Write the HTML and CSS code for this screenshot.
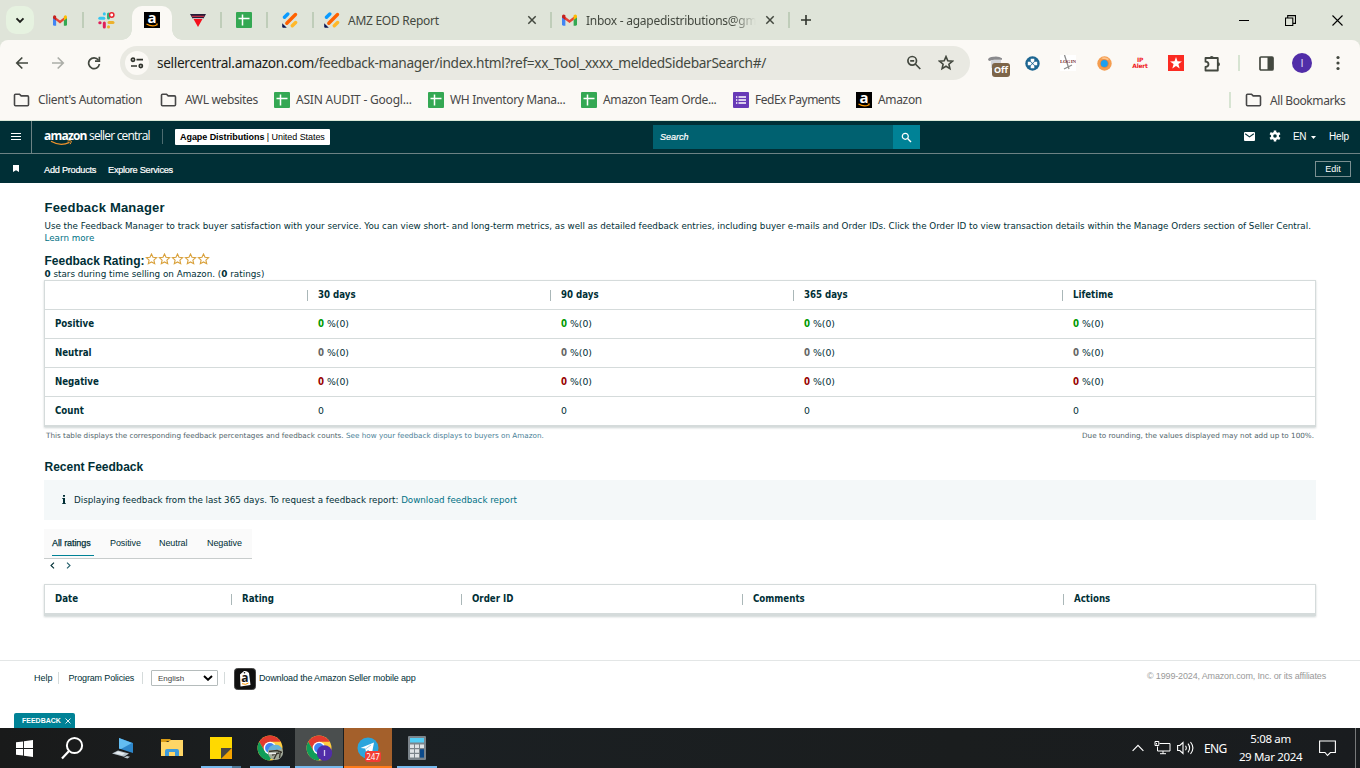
FILE: index.html
```html
<!DOCTYPE html>
<html lang="en">
<head>
<meta charset="utf-8">
<title>Feedback Manager</title>
<link rel="stylesheet" href="styles.css">
</head>
<body>
<svg class="defs" width="0" height="0">
  <symbol id="gmail" viewBox="0 0 16 12"><path fill="#4285f4" d="M0 2v8.5Q0 12 1.4 12H3.6V4z"/><path fill="#34a853" d="M16 2v8.5Q16 12 14.6 12h-2.2V4z"/><path fill="#ea4335" d="M1.5 1L8 6l6.500-5L13 5.500 8 9.300 3 5.500z"/><path fill="#c5221f" d="M0 2Q0 0 1.700 0q.8 0 1.900 1v5L0 3.300z"/><path fill="#fbbc04" d="M16 2q0-2-1.700-2-.8 0-1.900 1v5L16 3.300z"/></symbol>
  <symbol id="sheet" viewBox="0 0 16 16"><rect width="16" height="16" rx="1" fill="#34a853"/><path d="M2.500 6.500h11M6.500 2.500v11" stroke="#fff" stroke-width="1.500" fill="none"/></symbol>
  <symbol id="stripes" viewBox="0 0 16 16"><g stroke-linecap="round" stroke-width="3.400" fill="none"><path d="M2.500 5.300l3.300-3.300" stroke="#0a9bff"/><path d="M4.800 11.200l8.700-8.700" stroke="#ff6100"/><path d="M10.300 13.800l3.300-3.300" stroke="#ffb829"/></g><path fill="#0a1551" d="M.2 11.200l4.600 4.600H1.200Q.2 15.800.2 14.800z"/></symbol>
  <symbol id="folder" viewBox="0 0 16 14"><path d="M1 2.200Q1 1.200 2 1.200h4l1.700 1.700H14q1 0 1 1v7.900q0 1-1 1H2q-1 0-1-1z" fill="none" stroke="#474747" stroke-width="1.600"/></symbol>
  <symbol id="cross" viewBox="0 0 10 10"><path d="M1.300 1.300l7.400 7.400M8.700 1.300L1.300 8.700" stroke="#43483f" stroke-width="1.500"/></symbol>
  <symbol id="chrome" viewBox="0 0 26 26"><circle cx="13" cy="13" r="12.500" fill="#ffcd40"/><path fill="#e33b2e" d="M2.200 6.700A12.500 12.500 0 0 1 23.800 6.700H13L7.500 16z"/><path fill="#109d58" d="M2.200 6.700L7.600 16.100 13 19.200h3.500L12.500 25.500A12.500 12.500 0 0 1 2.200 6.700z"/><circle cx="13" cy="13" r="6.300" fill="#fff"/><circle cx="13" cy="13" r="4.900" fill="#4285f4"/></symbol>
  <symbol id="star" viewBox="0 0 12 12"><path d="M6 1l1.500 3.300 3.600.4-2.700 2.400.8 3.600L6 8.900l-3.200 1.800.8-3.600L.9 4.700l3.600-.4z" fill="#fff" stroke="#d9a13b" stroke-width="1.100"/></symbol>
</svg>

<div class="tabstrip">
  <div class="tabsearch"><svg width="10" height="7" viewBox="0 0 10 7"><path d="M1.500 1.300L5 4.800l3.500-3.500" fill="none" stroke="#1d1f1b" stroke-width="1.900"/></svg></div>
  <div class="tab sep"><svg width="14" height="11"><use href="#gmail"/></svg></div>
  <div class="tab"><svg width="17" height="17" viewBox="0 0 17 17"><g stroke-width="3" stroke-linecap="round" fill="none"><path d="M1.800 6.300h4" stroke="#36c5f0"/><path d="M6.300 1.800v.2" stroke="#36c5f0"/><path d="M10.500 2v4" stroke="#2eb67d"/><path d="M11 10.500h4" stroke="#ecb22e"/><path d="M10.500 14.800v.2" stroke="#ecb22e"/><path d="M6.300 11v4" stroke="#e01e5a"/><path d="M1.800 10.700h.3" stroke="#e01e5a"/></g><circle cx="13.700" cy="3" r="2.200" fill="#fff" stroke="#e8242f" stroke-width="1.500"/></svg></div>
  <div class="tab active"><span class="activebg"><svg class="amz" width="16" height="16" viewBox="0 0 16 16"><rect width="16" height="16"/><text class="aletter" x="8" y="10.800" text-anchor="middle" font-size="15" fill="#fff">a</text><path d="M2.500 12q5.500 3.200 10.200.9" fill="none" stroke="#f90" stroke-width="1.100"/><path fill="#f90" d="M11.500 11.700l2.500-.2-.8 2.200z"/></svg></span></div>
  <div class="tab sep"><svg width="16" height="13" viewBox="0 0 16 13"><path fill="#281c38" d="M0 0h16l-2.500 4.500h-11z"/><path fill="#c42d45" d="M1.500 1.800h13l-.8 1.200H2.300z"/><path fill="#f5101c" d="M3.500 5h9L8 13z"/><path fill="#e9c9cd" d="M2.500 4.300h11l-.4.700H2.900z"/></svg></div>
  <div class="tab sep"><svg width="16" height="16"><use href="#sheet"/></svg></div>
  <div class="tab sep"><svg width="16" height="16"><use href="#stripes"/></svg></div>
  <div class="tab wide sep"><svg width="16" height="16"><use href="#stripes"/></svg><span class="tabtitle">AMZ EOD Report</span><svg width="10" height="10"><use href="#cross"/></svg></div>
  <div class="tab wide sep"><svg width="15" height="12"><use href="#gmail"/></svg><span class="tabtitle t-inbox">Inbox - agapedistributions@gm</span><svg width="10" height="10"><use href="#cross"/></svg></div>
  <div class="newtab"><svg width="12" height="12" viewBox="0 0 12 12"><path d="M6 1v10M1 6h10" stroke="#30342d" stroke-width="1.600"/></svg></div>
  <div class="winbtns">
    <svg width="10" height="10" viewBox="0 0 10 10"><path d="M0 5.500h10" stroke="#000"/></svg>
    <svg width="11" height="11" viewBox="0 0 11 11"><path d="M.5 3h7.300v7.500H.5zM2.700 3V.6h7.800V8.400H7.800" fill="none" stroke="#000" stroke-width="1.100"/></svg>
    <svg width="11" height="11" viewBox="0 0 11 11"><path d="M.5.500l10 10M10.500.500l-10 10" stroke="#000" stroke-width="1.100"/></svg>
  </div>
</div>

<div class="chrome">
  <div class="toolbar">
    <div class="nav">
      <svg width="14" height="14" viewBox="0 0 14 14"><path d="M13 7H2M7.300 1.500L1.800 7l5.500 5.500" fill="none" stroke="#43483f" stroke-width="1.700"/></svg>
      <svg width="14" height="14" viewBox="0 0 14 14"><path d="M1 7h11M6.700 1.500L12.200 7l-5.500 5.500" fill="none" stroke="#acaea8" stroke-width="1.700"/></svg>
      <svg width="14" height="14" viewBox="0 0 14 14"><path d="M11.400 4A5.400 5.400 0 1 0 12.400 8" fill="none" stroke="#43483f" stroke-width="1.700"/><path d="M12.400.8v4.400H8" fill="none" stroke="#43483f" stroke-width="1.700"/></svg>
    </div>
    <div class="omnibox">
      <span class="siteinfo"><svg width="14" height="12" viewBox="0 0 14 12"><g fill="none" stroke="#30332d" stroke-width="1.700"><circle cx="3" cy="2.700" r="1.600"/><path d="M6.500 2.700H13M1 9h6"/><circle cx="10.800" cy="9" r="1.600"/></g></svg></span>
      <span class="url"><b>sellercentral.amazon.com</b>/feedback-manager/index.html?ref=xx_Tool_xxxx_meldedSidebarSearch#/</span>
      <svg class="oi" width="16" height="16" viewBox="0 0 16 16"><circle cx="6.200" cy="5.800" r="4.300" fill="none" stroke="#43483f" stroke-width="1.700"/><path d="M9.300 9l5 5M4.200 5.800h4" stroke="#43483f" stroke-width="1.700"/></svg>
      <svg class="oi" width="16" height="16" viewBox="0 0 16 16"><path d="M8 1.600l1.800 4.200 4.600.4-3.500 3 1 4.500L8 11.300l-3.900 2.400 1-4.500-3.500-3 4.600-.4z" fill="none" stroke="#43483f" stroke-width="1.600"/></svg>
    </div>
    <div class="ext">
      <span class="off"><svg width="17" height="17" viewBox="0 0 17 17"><path d="M1 4.500q1-3 6-2.800 5-.5 8 1.500v1.500H7L2 6z" fill="#8a8a8d"/><path d="M4 5h10v8H4z" fill="#d3d5db"/></svg><i>Off</i></span>
      <span><svg width="15" height="15" viewBox="0 0 15 15"><circle cx="7.500" cy="7.500" r="7.200" fill="#1d6691"/><g fill="#fff"><path d="M5.700 2.800h3.600v2.500L7.500 7 5.700 5.300zM5.700 12.200h3.600V9.700L7.500 8 5.700 9.700zM2.800 5.700v3.600h2.500L7 7.500 5.300 5.700zM12.200 5.700v3.600H9.700L8 7.500l1.700-1.800z"/></g></svg></span>
      <span class="login"><svg width="16" height="16" viewBox="0 0 16 16"><path fill="#fff" d="M0 0h16v16H0z"/><path d="M4.500 0l4.500 14M4 14l8-4" stroke="#8d8d8d" stroke-width="1.300"/><text x="0" y="7.800" font-size="5" font-weight="700" fill="#7b3540" textLength="16">LOG IN</text></svg></span>
      <span><svg width="15" height="15" viewBox="0 0 15 15"><circle cx="7.500" cy="7.500" r="7.200" fill="#f49d4f"/><path d="M4 2q4-2 8 1l-2 2z" fill="#ffc48b"/><circle cx="7.500" cy="7.500" r="4.300" fill="#d98343"/><circle cx="7.300" cy="7.500" r="3.500" fill="#1b9ff0"/></svg></span>
      <span class="ip">IP<br>Alert</span>
      <span><svg width="16" height="16" viewBox="0 0 16 16"><path fill="#fb2b22" d="M0 0h16v16H0z"/><path fill="#fff" d="M8 2l1.500 4.300 4.500.1-3.600 2.700 1.300 4.300L8 10.900l-3.700 2.500 1.300-4.300L2 6.400l4.500-.1z"/></svg></span>
      <span class="puzzle"><svg width="17" height="17" viewBox="0 0 17 17"><path d="M1.500 3h12.300v12.500H1.500V12Q4.500 11.500 4.500 9.200 4.500 7 1.500 6.700z" fill="none" stroke="#43483f" stroke-width="1.800" stroke-linejoin="round"/><path d="M5.700 3a2 2 0 0 1 4 0zM14 7.200a2 2 0 0 1 0 4z" fill="#43483f"/></svg></span>
      <em></em>
      <span><svg width="15" height="15" viewBox="0 0 15 15"><rect x="1" y="1" width="13" height="13" rx="1" fill="none" stroke="#43483f" stroke-width="1.700"/><path fill="#43483f" d="M8.500 1H14v13H8.500z"/></svg></span>
      <span><i class="avatar">I</i></span>
      <span><svg width="4" height="16" viewBox="0 0 4 16"><g fill="#43483f"><circle cx="2" cy="2.500" r="1.600"/><circle cx="2" cy="8" r="1.600"/><circle cx="2" cy="13.500" r="1.600"/></g></svg></span>
    </div>
  </div>
  <div class="bookmarks">
    <a class="bm f b1"><svg width="17" height="14"><use href="#folder"/></svg>Client's Automation</a>
    <a class="bm f b2"><svg width="17" height="14"><use href="#folder"/></svg>AWL websites</a>
    <a class="bm b3"><svg width="16" height="16"><use href="#sheet"/></svg>ASIN AUDIT - Googl...</a>
    <a class="bm b4"><svg width="16" height="16"><use href="#sheet"/></svg>WH Inventory Mana...</a>
    <a class="bm b5"><svg width="16" height="16"><use href="#sheet"/></svg>Amazon Team Orde...</a>
    <a class="bm b6"><svg width="16" height="16" viewBox="0 0 16 16"><rect width="16" height="16" rx="1" fill="#673ab7"/><path d="M5.500 5H13M5.500 8H13M5.500 11H13M3 5h1.300M3 8h1.300M3 11h1.300" stroke="#fff" stroke-width="1.400"/></svg>FedEx Payments</a>
    <a class="bm b7"><svg class="amz" width="16" height="16" viewBox="0 0 16 16"><rect width="16" height="16"/><text class="aletter" x="8" y="10.800" text-anchor="middle" font-size="15" fill="#fff">a</text><path d="M2.500 12q5.500 3.200 10.200.9" fill="none" stroke="#f90" stroke-width="1.100"/><path fill="#f90" d="M11.500 11.700l2.500-.2-.8 2.200z"/></svg>Amazon</a>
    <a class="bm f all"><svg width="17" height="14"><use href="#folder"/></svg>All Bookmarks</a>
  </div>
</div>

<header class="top">
  <div class="burger"><svg width="10" height="8" viewBox="0 0 10 8"><path d="M0 .5h10M0 3.500h10M0 6.500h10" stroke="#fff"/></svg></div>
  <div class="brand"><span><b>amazon</b> seller central</span><svg width="23" height="6" viewBox="0 0 23 6"><path d="M1 1.300q9.500 5.500 18.500 1" fill="none" stroke="#f0932b" stroke-width="1.300"/><path d="M17.500 1q3.500-.8 3.800 0t-1.200 3.200" fill="none" stroke="#f0932b"/></svg></div>
  <div class="account"><b>Agape Distributions</b> | United States</div>
  <div class="search"><i>Search</i><span><svg width="11" height="11" viewBox="0 0 11 11"><circle cx="4.300" cy="4.300" r="3" fill="none" stroke="#fff" stroke-width="1.200"/><path d="M6.600 6.600L10 10" stroke="#fff" stroke-width="1.400"/></svg></span></div>
  <div class="tools">
    <svg width="11" height="9" viewBox="0 0 11 9"><rect width="11" height="9" rx="1" fill="#fff"/><path d="M1.200 1.700l4.300 3.200 4.300-3.200" fill="none" stroke="#002f36" stroke-width="1.100"/></svg>
    <svg class="gear" width="12" height="12" viewBox="0 0 12 12"><g stroke="#fff" stroke-width="2.500"><path d="M6 .5v11M1.200 3.200l9.600 5.600M10.800 3.200L1.200 8.800"/></g><circle cx="6" cy="6" r="4" fill="#fff"/><circle cx="6" cy="6" r="1.800" fill="#002f36"/></svg>
    <span class="lang">EN</span><svg class="caret" width="5" height="3" viewBox="0 0 5 3"><path fill="#fff" d="M0 0h5L2.500 3z"/></svg>
    <span class="help">Help</span>
  </div>
</header>
<nav class="sub">
  <svg width="6" height="7" viewBox="0 0 6 7"><path fill="#fff" d="M0 0h6v7L3 5.200 0 7z"/></svg>
  <a class="s1">Add Products</a><a class="s2">Explore Services</a><button>Edit</button>
</nav>

<main>
  <h1>Feedback Manager</h1>
  <p class="intro">Use the Feedback Manager to track buyer satisfaction with your service. You can view short- and long-term metrics, as well as detailed feedback entries, including buyer e-mails and Order IDs. Click the Order ID to view transaction details within the Manage Orders section of Seller Central.</p>
  <p class="learn"><a>Learn more</a></p>
  <div class="rating"><h2>Feedback Rating:</h2><svg width="13" height="12"><use href="#star"/></svg><svg width="13" height="12"><use href="#star"/></svg><svg width="13" height="12"><use href="#star"/></svg><svg width="13" height="12"><use href="#star"/></svg><svg width="13" height="12"><use href="#star"/></svg></div>
  <p class="stars"><b>0</b> stars during time selling on Amazon. (<b>0</b> ratings)</p>

  <div class="table metrics">
    <div class="row head"><span></span><span>30 days</span><span>90 days</span><span>365 days</span><span>Lifetime</span></div>
    <div class="row pos"><b>Positive</b><span><b>0</b> %(0)</span><span><b>0</b> %(0)</span><span><b>0</b> %(0)</span><span><b>0</b> %(0)</span></div>
    <div class="row neu"><b>Neutral</b><span><b>0</b> %(0)</span><span><b>0</b> %(0)</span><span><b>0</b> %(0)</span><span><b>0</b> %(0)</span></div>
    <div class="row neg"><b>Negative</b><span><b>0</b> %(0)</span><span><b>0</b> %(0)</span><span><b>0</b> %(0)</span><span><b>0</b> %(0)</span></div>
    <div class="row"><b>Count</b><span>0</span><span>0</span><span>0</span><span>0</span></div>
  </div>
  <div class="notes"><span class="n1">This table displays the corresponding feedback percentages and feedback counts. <a>See how your feedback displays to buyers on Amazon.</a></span><span class="n2">Due to rounding, the values displayed may not add up to 100%.</span></div>

  <h2 class="recent">Recent Feedback</h2>
  <div class="alert"><svg width="4" height="9" viewBox="0 0 4 9"><path fill="#002f36" d="M1 0h2v1.800H1zM.3 3H3v5h.7v1H.3V8H1V4H.3z"/></svg><span>Displaying feedback from the last 365 days. To request a feedback report: <a>Download feedback report</a></span></div>
  <div class="filters"><span class="on">All ratings</span><span class="f2">Positive</span><span class="f3">Neutral</span><span class="f4">Negative</span></div>
  <div class="pager"><svg width="5" height="7" viewBox="0 0 5 7"><path d="M4 .6L1 3.500l3 2.900" fill="none" stroke="#002f36" stroke-width="1.100"/></svg><svg width="5" height="7" viewBox="0 0 5 7"><path d="M1 .6l3 2.900-3 2.900" fill="none" stroke="#235f6b" stroke-width="1.100"/></svg></div>
  <div class="table list"><div class="row head"><span>Date</span><span>Rating</span><span>Order ID</span><span>Comments</span><span>Actions</span></div></div>
</main>

<footer>
  <a class="g1">Help</a><a class="g2">Program Policies</a>
  <span class="selwrap"><span class="select">English<svg width="10" height="6" viewBox="0 0 10 6"><path d="M1 1l4 3.800L9 1" fill="none" stroke="#000" stroke-width="1.900"/></svg></span></span>
  <svg class="appicon" width="22" height="22" viewBox="0 0 22 22"><rect x=".5" y=".5" width="21" height="21" rx="3" fill="#101010" stroke="#444"/><path d="M6 6.500l4-3.500q3-.5 5 2l1.500 12-10 1.500z" fill="#fff"/><circle cx="10.500" cy="4.800" r=".8" fill="#101010"/><text class="aletter" x="10.800" y="14" text-anchor="middle" font-size="12" fill="#151515">a</text><path d="M8 15.700q3.500 1.600 6.500-.7" fill="none" stroke="#f90"/></svg>
  <a class="g3">Download the Amazon Seller mobile app</a>
  <span class="copy">© 1999-2024, Amazon.com, Inc. or its affiliates</span>
</footer>
<div class="dock"><span class="fb">FEEDBACK<svg width="6" height="6" viewBox="0 0 6 6"><path d="M.5.500l5 5m0-5l-5 5" stroke="#fff" stroke-width=".9"/></svg></span></div>

<div class="taskbar">
  <div class="app"><svg width="17" height="17" viewBox="0 0 17 17"><path fill="#fff" d="M0 2.300L7 1.400v6.700H0zM7.900 1.200L17 0v8.100H7.900zM0 8.900h7v6.700l-7-.9zM7.900 8.900H17V17l-9.100-1.200z"/></svg></div>
  <div class="app find"><svg width="24" height="24" viewBox="0 0 24 24"><circle cx="14.500" cy="9.500" r="7.600" fill="none" stroke="#fff" stroke-width="2"/><path d="M9 15l-7 7.500" stroke="#fff" stroke-width="2.200"/></svg></div>
  <div class="app pc"><svg width="24" height="22" viewBox="0 0 24 22"><path fill="#2d86ca" d="M8 1l14 5v10L8 11.500z"/><path fill="#63bdf2" d="M8 1l13 5L10 12 8 11.500z"/><path fill="#b9c5cd" d="M1 16.500l6-3 11 3-5 3.300zM13 20.500l3-1.500 3 .8-2.500 1.700z"/><path fill="#e6ecf0" d="M3.500 16.200l3.500-1.700 7 2-3 1.600z"/></svg></div>
  <div class="app"><svg width="22" height="20" viewBox="0 0 22 20"><path fill="#d99c16" d="M0 1h9l2 2h-4L0 6z"/><path fill="#ffd666" d="M0 4h7l3-2h12v16H0z"/><path fill="#3d9bdb" d="M4 18v-5q0-2 2-2h10q2 0 2 2v5h-4v-4H8v4z"/></svg></div>
  <div class="app u note"><svg width="22" height="22" viewBox="0 0 22 22"><path fill="#ffd900" d="M0 0h22v11L11 22H0z"/><path fill="#4a4640" d="M11 11h11L11 22z"/><path fill="#f5a400" d="M22 11v11H11z"/></svg></div>
  <div class="app u person"><svg width="30" height="26" viewBox="0 0 30 26"><use href="#chrome" width="26" height="26"/><circle cx="18.500" cy="17.500" r="7.600" fill="#a3ab9c"/><path fill="#68b3d8" d="M11 15q2-5.500 8-5.300 4 0 6 4L19 15z"/><path d="M12 16.500l8-1 5 2M15 20l7-2M17 24l3-6M22.500 23l1-7" stroke="#3a372e" stroke-width="1.400" fill="none"/><path d="M12 18.500h7" stroke="#eee" stroke-width="1.500"/></svg></div>
  <div class="app u cur person"><svg width="30" height="26" viewBox="0 0 30 26"><use href="#chrome" width="26" height="26"/><circle cx="18.500" cy="18" r="7.700" fill="#512da8"/><path d="M18.500 15v6" stroke="#d5cbed" stroke-width="1.300"/></svg></div>
  <div class="app u tele"><svg width="22" height="22" viewBox="0 0 22 22"><circle cx="11" cy="11" r="10.500" fill="#2ca5dc"/><path fill="#fff" d="M3.500 11L17 5.500 15 16l-4-3-2 2-.7-3.500z"/><path d="M8.500 12L14 8" stroke="#9fd0e8"/></svg><i>247</i></div>
  <div class="app u calc"><svg width="18" height="24" viewBox="0 0 18 24"><rect width="18" height="24" rx="1" fill="#7b848b"/><path fill="#52cdf5" d="M2 2h14v4.500H2z"/><path fill="#dfe3e6" d="M2 8.500h4v3.600H2zM7 8.500h4v3.600H7zM12 8.500h4v3.600h-4zM2 13.200h4v3.600H2zM7 13.200h4v3.600H7zM2 18h4v3.600H2zM7 18h4v3.600H7z"/><path fill="#0c4a8a" d="M12 13.200h4v8.400h-4z"/></svg></div>
  <div class="tray">
    <svg width="12" height="8" viewBox="0 0 12 8"><path d="M.6 6.800L6 1.400l5.400 5.400" fill="none" stroke="#fff" stroke-width="1.200"/></svg>
    <svg class="net" width="17" height="14" viewBox="0 0 17 14"><path d="M5.500 2.500h10.500v7.500H3.500V5.500M6 12.700h6M9 10v2.700M1 .5h3.800v4H1zM2.500 2v1.500" fill="none" stroke="#fff"/></svg>
    <svg class="vol" width="17" height="14" viewBox="0 0 17 14"><path d="M.6 4.500h2.200L6 1.500v11L2.800 9.500H.6zM8.500 4.700q1.600 2.300 0 4.600M11 2.700q3.200 4.300 0 8.600M13.500 1q4.800 6 0 12" fill="none" stroke="#fff" stroke-width="1.100"/></svg>
    <span class="eng">ENG</span>
    <span class="clock"><span class="c1">5:08 am</span><span class="c2">29 Mar 2024</span></span>
    <svg class="msg" width="17" height="17" viewBox="0 0 17 17"><path d="M.6 1h15.800v11.500h-5L8.500 15.500 6 12.500H.6z" fill="none" stroke="#fff" stroke-width="1.100"/></svg>
  </div>
</div>
</body>
</html>
```
FILE: styles.css
```css
* { box-sizing: border-box; }
body { margin: 0; width: 1360px; height: 768px; overflow: hidden; display: flex; flex-direction: column; background: #fff; color: #002f36; font-family: "DejaVu Sans", sans-serif; font-size: 8.740px; white-space: nowrap; }
svg { display: block; flex: none; }
.defs { position: absolute; }
.amz, .appicon { overflow: visible; }
p, h1, h2 { margin: 0; }
i, em { font-style: normal; }
.aletter { font-family: "Open Sans", sans-serif; font-weight: 700; letter-spacing: 0; }

/* browser tabs */
.tabstrip { height: 40px; flex: none; background: #dfe4d9; display: flex; font-family: "Noto Sans", sans-serif; font-size: 12px; letter-spacing: -.28px; color: #43483f; }
.tabsearch { width: 28px; height: 28px; margin: 6px 3px 0 6px; border-radius: 10px; background: #e6f2e0; display: grid; place-items: center; }
.tab { width: 46px; position: relative; display: flex; align-items: center; justify-content: center; }
.tab.sep::after { content: ""; position: absolute; right: -1px; top: 12px; width: 2px; height: 16px; background: #bfcdb9; }
.tab.wide { width: 238px; justify-content: flex-start; padding-left: 11px; }
.activebg { position: relative; width: 40px; height: 34px; margin-top: 6px; background: #fbf9f5; border-radius: 10px 10px 0 0; display: flex; justify-content: center; padding-top: 6px; }
.activebg::before, .activebg::after { content: ""; position: absolute; bottom: 0; width: 10px; height: 10px; }
.activebg::before { left: -10px; background: radial-gradient(circle at 0 0, transparent 9.5px, #fbf9f5 10px); }
.activebg::after { right: -10px; background: radial-gradient(circle at 100% 0, transparent 9.5px, #fbf9f5 10px); }
.tabtitle { margin-left: 8px; width: 179px; padding-top: 1px; }
.t-inbox { width: 179px; margin: 0 0 0 9px; letter-spacing: -.26px; -webkit-mask-image: linear-gradient(90deg, #000 145px, transparent 170px); }
.newtab { width: 34px; display: grid; place-items: center; }
.winbtns { margin-left: auto; display: flex; align-items: center; gap: 36px; padding-right: 17px; }

/* toolbar */
.chrome { height: 81px; flex: none; background-color: #fbf9f5; border-bottom: 1px solid #dbe8d9; font-family: "Noto Sans", sans-serif; position: relative; border-radius: 8px 8px 0 0; box-shadow: 0 -10px 0 0 #dfe4d9; clip-path: inset(0); }
.toolbar { height: 46px; display: flex; align-items: center; }
.nav { width: 120px; display: flex; gap: 22px; padding-left: 15px; }
.omnibox { width: 850px; height: 34px; border-radius: 17px; background: #e9e9e2; display: flex; align-items: center; padding-left: 5px; }
.siteinfo { width: 24px; height: 24px; border-radius: 12px; background: #fbf9f5; display: grid; place-items: center; }
.url { width: 749px; margin-left: 8px; font-size: 13.700px; color: #43483f; letter-spacing: -.34px; padding-bottom: 1px; }
.url b { font-weight: 400; color: #1b1d19; }
.oi { margin-right: 16px; }
.ext { display: flex; margin-left: 10px; align-items: center; }
.ext > span { width: 36px; height: 24px; display: grid; place-items: center; position: relative; }
.ext .off { width: 34px; }
.ext .off svg { margin-right: 4px; }
.ext .off i { position: absolute; left: 12px; top: 12px; width: 18px; height: 14px; border-radius: 3px; background: #7d6549; color: #fff; font-weight: 700; font-size: 9px; line-height: 14px; text-align: center; }
.login text { font-family: "Liberation Serif", serif; }
.ext .ip { color: #f0201c; font: 700 6px/6px "DejaVu Sans", sans-serif; text-align: center; display: block; padding-top: 6px; letter-spacing: -.2px; }
.ext .puzzle { padding-left: 1px; }
.ext em { width: 2px; height: 16px; margin: 0 8px; background: #d7e4d2; }
.avatar { width: 20px; height: 20px; border-radius: 10px; background: #512da8; color: #d8cff0; font: 11px/20px "Liberation Sans", sans-serif; text-align: center; }

.bookmarks { height: 34px; display: flex; padding: 0 14px 0 13px; font-size: 12px; color: #474747; letter-spacing: -.34px; }
.bm { display: flex; align-items: center; gap: 6px; height: 27px; }
.bm.f { gap: 8px; }
.b1 { width: 147px; }
.b2 { width: 114px; }
.b3 { width: 154px; letter-spacing: -.2px; }
.b4 { width: 153px; }
.b5 { width: 152px; letter-spacing: -.38px; }
.b6 { width: 123px; letter-spacing: -.5px; }
.bm.all { margin-left: auto; width: 117px; padding-left: 14px; border-left: 2px solid #d7e4d2; height: 16px; margin-top: 6px; letter-spacing: -.42px; }

/* seller central header */
.top { height: 33px; flex: none; background: #002f36; border-bottom: 1px solid #6d8284; display: flex; color: #fff; font-family: "Liberation Sans", sans-serif; }
.burger { width: 32px; border-right: 1px solid #6d8284; display: grid; place-items: center; }
.brand { position: relative; width: 131px; height: 15px; margin-top: 8px; padding-left: 12px; border-right: 1px solid #4d6c70; font: 12px/14px "Open Sans", sans-serif; letter-spacing: -.8px; }
.brand b { font-weight: 700; }
.brand svg { position: absolute; left: 18px; top: 11px; }
.account { width: 155px; height: 16px; margin: 8px 0 0 12px; background: #fff; border-radius: 1px; color: #000; font-size: 9px; line-height: 16px; padding-left: 5px; letter-spacing: -.06px; }
.search { width: 267px; height: 24px; margin: 4px 0 0 323px; background: #006170; display: flex; justify-content: space-between; line-height: 24px; padding-left: 7px; }
.search i { font-style: italic; font-size: 9px; -webkit-text-stroke: .2px; }
.search span { width: 27px; background: #008296; display: grid; place-items: center; }
.tools { display: flex; align-items: center; margin-left: 324px; height: 30px; font-size: 10px; letter-spacing: -.2px; }
.gear { margin: 0 12px 0 14px; }
.lang { width: 13px; letter-spacing: -.4px; }
.caret { margin: 2px 13px 0 5px; }
.sub { height: 29px; flex: none; background: #002f36; display: flex; align-items: center; color: #fff; font: 9.200px "Liberation Sans", sans-serif; padding-left: 13px; }
.sub svg { margin-bottom: 1px; }
.sub a { padding-top: 2px; letter-spacing: -.25px; -webkit-text-stroke: .2px; }
.s1 { margin-left: 25px; width: 64px; }
.sub button { margin: 1px 9px 0 auto; width: 36px; height: 16px; padding: 0; border: 1px solid #7b8f91; background: none; color: #fff; font: 9px "Liberation Sans", sans-serif; }

/* page body */
main { height: 477px; flex: none; padding: 17px 44px 0; }
h1, h2 { font: 700 12.500px/15px "Liberation Sans", sans-serif; letter-spacing: .1px; }
h1 { margin-left: .5px; letter-spacing: .2px; font-size: 13px; }
a { color: inherit; }
main a { color: #007185; }
.intro { margin-top: 5px; line-height: 12px; }
.learn { line-height: 12px; }
.intro, .learn, .stars { padding-left: .5px; }
.rating { display: flex; height: 15px; margin-top: 9px; }
.rating h2 { width: 101px; font-size: 12px; padding: 1px 0 0 .5px; letter-spacing: 0; }
.stars { line-height: 12px; font-size: 8.800px; }
.table { border: 1px solid #d5dbdb; border-bottom-width: 2px; box-shadow: 0 1px 2px rgba(0,40,40,.2); }
.metrics { height: 147px; font-size: 9.300px; }
.row { display: grid; height: 29px; align-items: center; border-bottom: 1px solid #d5dbdb; line-height: 28px; }
.row:last-child { border-bottom-color: transparent; height: 28px; line-height: 27px; }
.metrics .row { grid-template-columns: 262px 243px 243px 269px auto; }
.list .row { grid-template-columns: 186px 230px 281px 321px auto; }
.row > b:first-child, .row > span:first-child { padding-left: 10px; }
.row > span:not(:first-child) { padding-left: 11px; }
.row b, .head { font-family: "DejaVu Sans Condensed", "DejaVu Sans", sans-serif; font-weight: 700; font-size: 9.650px; }
.head span { position: relative; }
.head span:not(:first-child)::before { content: ""; position: absolute; left: 0; top: 9px; width: 1px; height: 11px; background: #aab7b8; }
.pos span b { color: #090; }
.neu span b { color: #666; }
.neg span b { color: #900; }
.notes { display: flex; justify-content: space-between; font-size: 7.230px; line-height: 10px; margin-top: 4px; padding: 0 2px; color: #50646a; }
.notes a { color: #4a7f98; }
.recent { margin: 19px 0 0 .5px; font-size: 12px; letter-spacing: 0; }
.alert { margin-top: 5px; height: 40px; background: #f4f8f9; display: flex; align-items: center; padding: 0 0 1px 18px; gap: 8px; }
.filters { margin-top: 9px; width: 208px; height: 30px; background: #fafafa; border-bottom: 1px solid #c8cccc; font: 9px/28px "Liberation Sans", sans-serif; letter-spacing: -.08px; display: flex; padding-left: 8px; }
.filters .on { width: 42px; height: 27px; border-bottom: 1px solid #008296; -webkit-text-stroke: .25px; margin-right: 16px; }
.f2 { width: 49px; }
.f3 { width: 48px; }
.pager { display: flex; gap: 11px; padding: 3px 6px 0; height: 25px; }
.list { height: 32px; border-bottom-width: 3px; }

footer { height: 53px; flex: none; border-top: 1px solid #e3e6e6; display: flex; font: 9px "Liberation Sans", sans-serif; letter-spacing: -.15px; padding: 7px 34px 0; }
footer a { line-height: 20px; }
.g1 { width: 34.500px; letter-spacing: 0; }
.g2 { width: 82.500px; }
.g1, .g2 { position: relative; }
.g1::after, .g2::after { content: ""; position: absolute; top: 4px; width: 1px; height: 12px; background: #d5dbdb; }
.g1::after { left: 24px; }
.g2::after { left: 73px; }
.selwrap { width: 83px; padding-top: 2px; position: relative; }
.selwrap::after { content: ""; position: absolute; left: 73px; top: 4px; width: 1px; height: 12px; background: #d5dbdb; }
.select { width: 67px; height: 16px; border: 1px solid #b5bcbc; border-radius: 1px; display: flex; align-items: center; justify-content: space-between; padding: 0 4px 0 6px; font-size: 8px; letter-spacing: 0; color: #444; }
.g3 { margin-left: 3px; }
.copy { margin-left: auto; line-height: 17px; color: #999; }
.dock { height: 15px; flex: none; padding-left: 14px; }
.fb { width: 61px; height: 15px; background: #008296; border-radius: 2px 2px 0 0; display: flex; align-items: center; padding-left: 8px; gap: 4px; color: #fff; font: 700 7px "Liberation Sans", sans-serif; }

/* desktop taskbar */
.taskbar { height: 40px; flex: none; background: linear-gradient(90deg, #191a1a, #1b2023 30%, #1a1d1e 70%, #191c1f); display: flex; font-family: "Noto Sans", sans-serif; color: #fff; }
.app { width: 49px; position: relative; display: grid; place-items: center; }
.app.find { padding-right: 3px; }
.app.person { padding-left: 4px; }
.app.u::after { content: ""; position: absolute; left: 5px; bottom: 0; width: 40px; height: 2px; background: #76b9ed; }
.app.note::after { background: linear-gradient(90deg, #76b9ed 31px, #4d7898 31px); }
.app.cur { background: linear-gradient(#4a4e4e, #4a4e4e) 1px 0 / 48px 40px no-repeat; }
.app.cur::after, .app.tele::after { left: 1px; width: 48px; }
.app.tele { background: linear-gradient(#a4602b, #a4602b) 1px 0 / 48px 40px no-repeat; }
.app.tele::after { background: #ff7b1a; }
.tele i { position: absolute; left: 22px; top: 23px; width: 16px; height: 11px; background: #f23c34; border-radius: 3px; font-size: 8px; line-height: 11px; text-align: center; }
.tray { margin-left: auto; display: flex; align-items: center; padding-right: 24px; position: relative; }
.tray::after { content: ""; position: absolute; right: 4px; top: 0; width: 1px; height: 40px; background: #77797a; }
.net { margin: 0 6px 0 10px; }
.eng { width: 34px; margin-left: 10px; font-size: 12px; letter-spacing: -.6px; }
.clock { width: 65px; display: flex; flex-direction: column; align-items: center; font-size: 11.500px; line-height: 18px; letter-spacing: -.35px; padding-bottom: 1px; }
.msg { margin-left: 16px; }
```
